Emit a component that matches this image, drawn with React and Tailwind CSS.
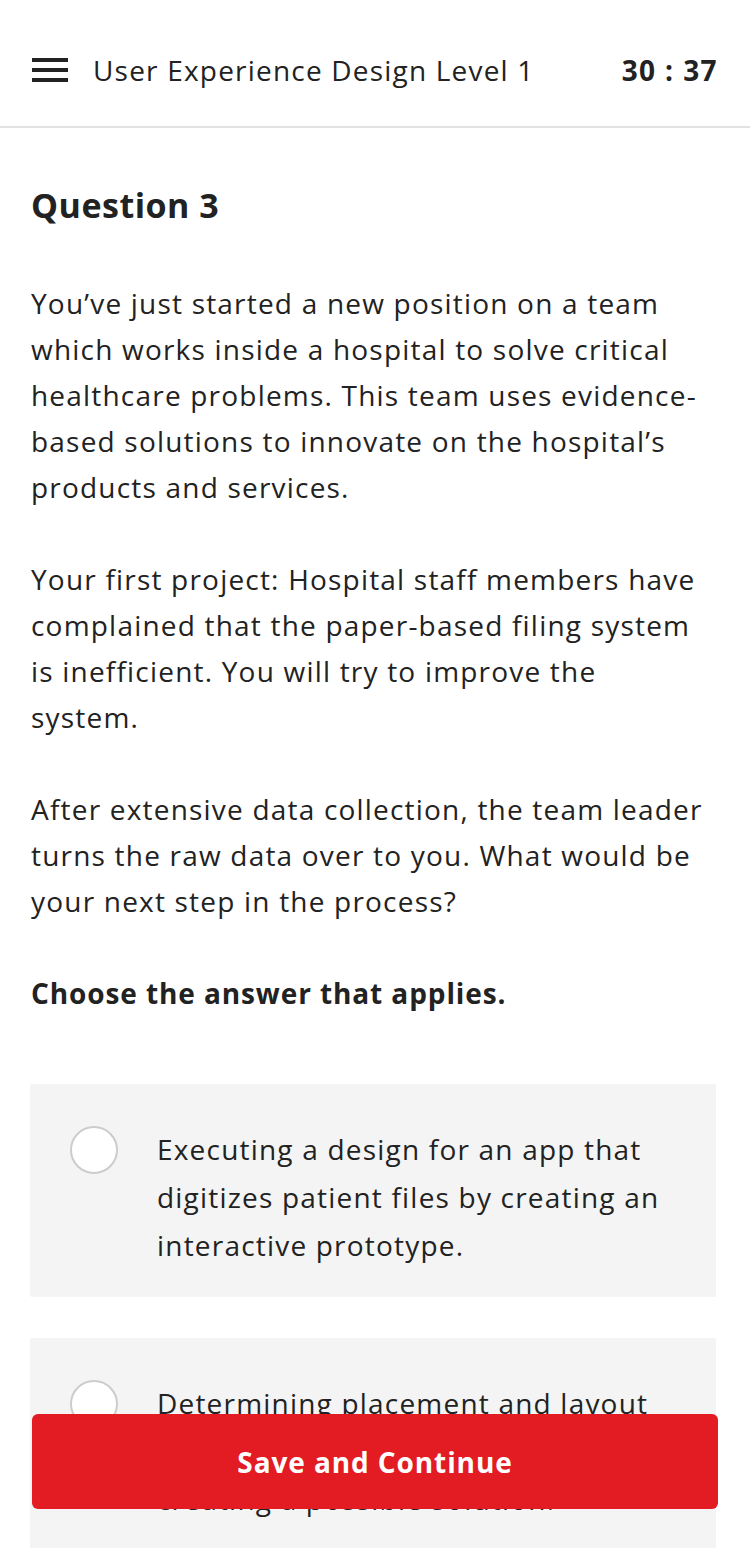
import React from "react";

function Radio() {
  return (
    <div className="w-[48px] h-[48px] shrink-0 rounded-full border-[2px] border-[#cccccc] bg-white" />
  );
}

function Option({ children }) {
  return (
    <div className="bg-[#f4f4f4] rounded-[2px] pl-[40px] pr-[30px] pt-[41px] pb-[28px] flex gap-[39px]">
      <div className="pt-[1px]">
        <Radio />
      </div>
      <p className="text-[28px] leading-[48px] tracking-[1.2px] text-[#222222]">{children}</p>
    </div>
  );
}

export default function App() {
  return (
    <div className="relative w-[750px] h-[1548px] overflow-hidden bg-white text-[#222222] font-['Open_Sans',sans-serif]">
      <header className="h-[128px] pt-[14px] border-b-[2px] border-[#e2e2e2] flex items-center pl-[32px] pr-[32px]">
        <div className="flex flex-col gap-[6px] w-[36px] mr-[25px]">
          <span className="block h-[4px] bg-[#222222]" />
          <span className="block h-[4px] bg-[#222222]" />
          <span className="block h-[4px] bg-[#222222]" />
        </div>
        <div className="text-[28px] tracking-[1.2px] flex-1">User Experience Design Level 1</div>
        <div className="text-[28px] font-bold tracking-[1.4px]">30 : 37</div>
      </header>

      <main className="pl-[30px] pr-[34px] pt-[57px]">
        <div className="pl-[1px] pr-[5px]">
          <h1 className="text-[34px] leading-[40px] font-bold tracking-[0.5px]">Question 3</h1>
          <div className="mt-[55px] text-[28px] leading-[46px] tracking-[1.2px]">
            <p>
              You’ve just started a new position on a team which works inside a hospital to solve critical
              healthcare problems. This team uses evidence-based solutions to innovate on the hospital’s
              products and services.
            </p>
            <p className="mt-[46px]">
              Your first project: Hospital staff members have complained that the paper-based filing system
              is inefficient. You will try to improve the system.
            </p>
            <p className="mt-[46px]">
              After extensive data collection, the team leader turns the raw data over to you. What would be
              your next step in the process?
            </p>
            <p className="mt-[46px] font-bold tracking-[0.9px]">Choose the answer that applies.</p>
          </div>
        </div>

        <div className="mt-[68px] flex flex-col gap-[41px]">
          <Option>
            Executing a design for an app that digitizes patient files by creating an interactive prototype.
          </Option>
          <Option>
            Determining placement and layout
            <br />
            of the interface for a filing app by
            <br />
            creating a possible solution.
          </Option>
        </div>
      </main>

      <button className="absolute left-[32px] top-[1414px] w-[686px] h-[95px] rounded-[6px] bg-[#e31b23] text-white text-[28px] font-bold tracking-[0.9px]">
        Save and Continue
      </button>
    </div>
  );
}
